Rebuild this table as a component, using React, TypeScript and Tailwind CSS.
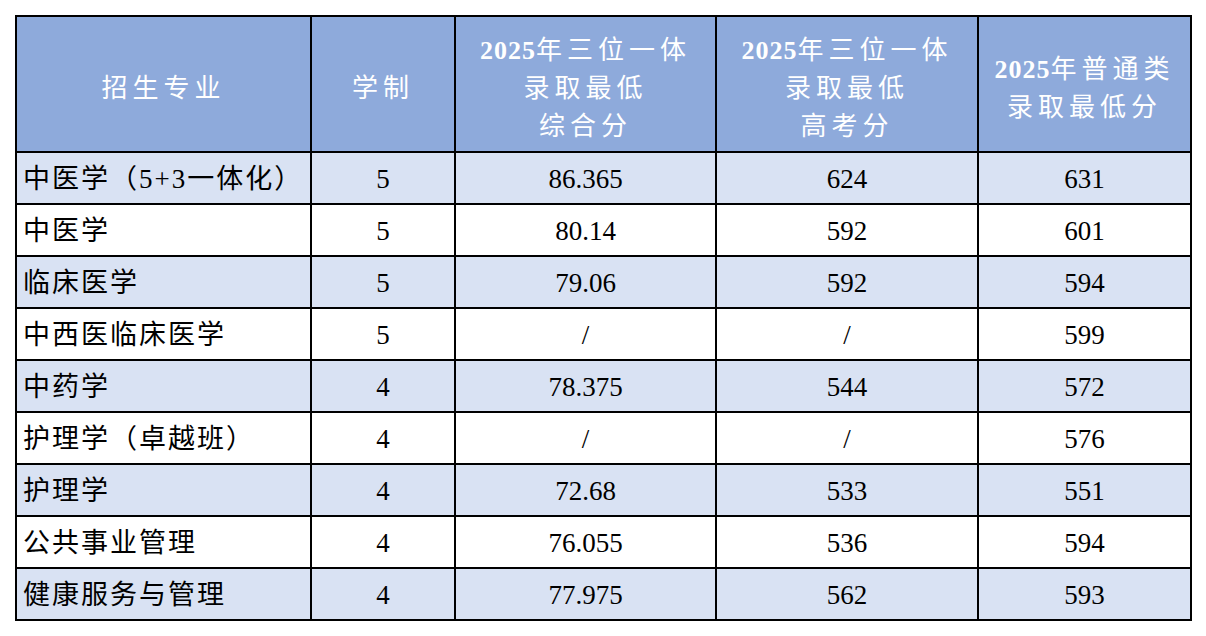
import React from 'react';

// 2025 admission score rows
const rows = [
  { major: '中医学（5+3一体化）', years: '5', combined: '86.365', gaokao: '624', normal: '631' },
  { major: '中医学', years: '5', combined: '80.14', gaokao: '592', normal: '601' },
  { major: '临床医学', years: '5', combined: '79.06', gaokao: '592', normal: '594' },
  { major: '中西医临床医学', years: '5', combined: '/', gaokao: '/', normal: '599' },
  { major: '中药学', years: '4', combined: '78.375', gaokao: '544', normal: '572' },
  { major: '护理学（卓越班）', years: '4', combined: '/', gaokao: '/', normal: '576' },
  { major: '护理学', years: '4', combined: '72.68', gaokao: '533', normal: '551' },
  { major: '公共事业管理', years: '4', combined: '76.055', gaokao: '536', normal: '594' },
  { major: '健康服务与管理', years: '4', combined: '77.975', gaokao: '562', normal: '593' },
];

const font = { fontFamily: '"Liberation Serif", "Noto Sans CJK SC", serif' };

const Year = () => <span className="font-bold tracking-[1px]">2025</span>;

export default function App() {
  return (
    <div className="w-[1206px] h-[636px] bg-white pt-[15px] pl-[15px]" style={font}>
      <table className="border-collapse border-2 border-black w-[1175px] table-fixed">
        <colgroup>
          <col className="w-[295px]" />
          <col className="w-[144px]" />
          <col className="w-[261px]" />
          <col className="w-[262px]" />
          <col className="w-[213px]" />
        </colgroup>
        <thead>
          <tr className="h-[136px] bg-[#8eaadb] text-white text-[26px] leading-[38px] tracking-[5px]">
            <th className="border-2 border-black font-normal pt-[10px]">招生专业</th>
            <th className="border-2 border-black font-normal pt-[10px]">学制</th>
            <th className="border-2 border-black font-normal pt-[10px]">
              <Year />年三位一体<br />录取最低<br />综合分
            </th>
            <th className="border-2 border-black font-normal pt-[10px]">
              <Year />年三位一体<br />录取最低<br />高考分
            </th>
            <th className="border-2 border-black font-normal pt-[10px]">
              <Year />年普通类<br />录取最低分
            </th>
          </tr>
        </thead>
        <tbody>
          {rows.map((r, i) => (
            <tr key={i} className={`h-[52px] text-[27px] text-black ${i % 2 === 0 ? 'bg-[#d9e2f3]' : 'bg-white'}`}>
              <td className="border-2 border-black pl-[6px] pt-[3px] tracking-[2px] whitespace-nowrap">{r.major}</td>
              <td className="border-2 border-black pt-[3px] text-center">{r.years}</td>
              <td className="border-2 border-black pt-[3px] text-center">{r.combined}</td>
              <td className="border-2 border-black pt-[3px] text-center">{r.gaokao}</td>
              <td className="border-2 border-black pt-[3px] text-center">{r.normal}</td>
            </tr>
          ))}
        </tbody>
      </table>
    </div>
  );
}
